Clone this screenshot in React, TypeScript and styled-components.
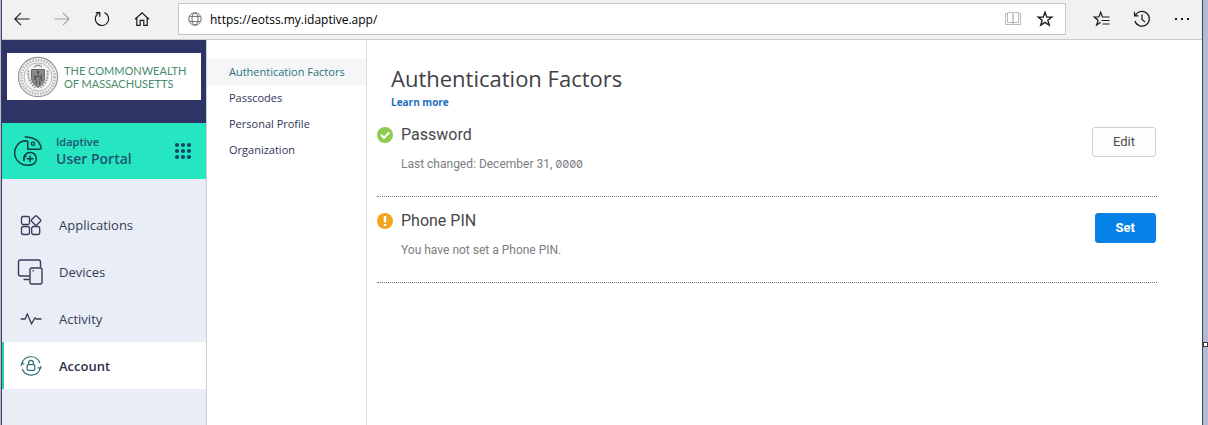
import React from "react";
import styled, { createGlobalStyle, css } from "styled-components";

const GlobalStyle = createGlobalStyle`
  *, *::before, *::after { box-sizing: border-box; }
  body { margin: 0; background: #b5bad6; font-family: "Open Sans", "Noto Sans", sans-serif; }
  button, input { font: inherit; }
  a { text-decoration: none; }
  ul { list-style: none; margin: 0; padding: 0; }
`;

const Desktop = styled.div`
  position: relative;
  min-height: 100vh;
  padding: 0 5px 0 1px;
  display: flex;
`;

const ResizeHandle = styled.span`
  position: absolute;
  right: 0;
  top: 342px;
  width: 5px;
  height: 5px;
  border: 1px solid #3a3a44;
  background: #fff;
`;

const BrowserWindow = styled.div`
  flex: 1;
  min-width: 0;
  display: flex;
  flex-direction: column;
  background: #fff;
  border: solid #3b4255;
  border-width: 0 1px;
`;

const Toolbar = styled.header`
  display: flex;
  align-items: center;
  height: 40px;
  padding: 0 8px 1px;
  background: #f1f1f1;
  border-bottom: 1px solid #c9c9c9;
`;

const ToolButton = styled.button<{ $faded?: boolean }>`
  display: grid;
  place-items: center;
  width: 24px;
  height: 24px;
  padding: 0;
  border: 0;
  background: none;
  color: ${(p) => (p.$faded ? "#a2a2a2" : "#1a1a1a")};
`;

const NavTools = styled.div`
  display: flex;
  gap: 16px;
  margin-right: 24px;
`;

const SideTools = styled.div`
  display: flex;
  gap: 16px;
  margin-left: 24px;
`;

const AddressBar = styled.div`
  flex: 1;
  display: flex;
  align-items: center;
  height: 32px;
  padding: 0 8px;
  background: #fff;
  border: 1px solid #c6c6c6;
`;

const AddressInput = styled.input`
  flex: 1;
  min-width: 0;
  margin: 0 8px 0 7px;
  padding: 0;
  border: 0;
  outline: 0;
  background: none;
  color: #000;
  font-family: "Open Sans", sans-serif;
  font-size: 12px;
`;

const AddressTools = styled.div`
  display: flex;
  gap: 8px;
`;

const Page = styled.div`
  flex: 1;
  display: flex;
`;

const Sidebar = styled.aside`
  flex: 0 0 205px;
  min-width: 0;
  background: #e9edf6;
  border-right: 1px solid #ccd0d9;
`;

const Brand = styled.div`
  height: 83px;
  padding: 13px 5px;
  background: #2f3466;
`;

const BrandCard = styled.div`
  display: flex;
  align-items: center;
  gap: 5px;
  height: 47px;
  padding-left: 10px;
  background: #fff;
  color: #468c6a;
  font-family: Lato, sans-serif;
  font-size: 11px;
  line-height: 13px;
  white-space: nowrap;
`;

const Portal = styled.div`
  display: flex;
  align-items: center;
  height: 56px;
  padding: 0 14px 0 12px;
  background: #26e5c1;
  color: #1d5570;
`;

const PortalName = styled.div`
  flex: 1;
  margin-left: 12px;
  font-size: 14px;
  line-height: 18px;
  font-weight: 600;
`;

const PortalVendor = styled.span`
  display: block;
  font-size: 11px;
  line-height: 16px;
`;

const LauncherButton = styled.button`
  display: grid;
  place-items: center;
  padding: 0;
  border: 0;
  background: none;
  color: #174866;
`;

const SideList = styled.ul`
  padding-top: 22px;
`;

const SideLink = styled.a<{ $active?: boolean }>`
  display: flex;
  align-items: center;
  gap: 13px;
  height: 47px;
  padding-left: 12px;
  border-left: 2px solid transparent;
  color: #363c58;
  font-size: 13px;
  ${(p) =>
    p.$active &&
    css`
      border-left-color: #2fcfa8;
      background: #fff;
      color: #2c3149;
      font-weight: 600;
    `}
`;

const SubNav = styled.nav`
  flex: 0 0 160px;
  padding-top: 19px;
  border-right: 1px solid #dadce1;
`;

const SubLink = styled.a<{ $active?: boolean }>`
  display: block;
  height: 26px;
  padding-left: 22px;
  font-size: 11px;
  line-height: 26px;
  white-space: nowrap;
  color: ${(p) => (p.$active ? "#2c7378" : "#2f3459")};
  background: ${(p) => (p.$active ? "#f5f6f8" : "transparent")};
`;

const Main = styled.main`
  flex: 1;
  min-width: 0;
  padding: 24px 45px 0 10px;
`;

const Heading = styled.div`
  height: 47px;
  padding-left: 14px;
`;

const Title = styled.h1`
  margin: 0;
  color: #3f4145;
  font-size: 22px;
  line-height: 28px;
  font-weight: 400;
`;

const LearnMore = styled.a`
  display: block;
  color: #1b6fc0;
  font-size: 10px;
  line-height: 20px;
  font-weight: 700;
`;

const Factor = styled.section`
  display: flex;
  align-items: flex-start;
  height: 86px;
  padding: 14px 1px 0 0;
  border-bottom: 1px dotted #777;
  font-family: Roboto, sans-serif;

  > svg {
    margin-top: 2px;
  }
`;

const FactorText = styled.div`
  flex: 1;
  margin-left: 8px;
`;

const FactorName = styled.h2`
  margin: 0;
  color: #46484c;
  font-size: 16px;
  line-height: 20px;
  font-weight: 400;
`;

const FactorNote = styled.p`
  margin: 10px 0 0;
  color: #7c7e81;
  font-size: 12px;
  line-height: 18px;
`;

const Year = styled.span`
  font-family: Inter, sans-serif;
  font-size: 11px;
  font-feature-settings: "zero";
`;

const ActionButton = styled.button<{ $primary?: boolean }>`
  height: 30px;
  margin-top: 2px;
  padding: 0 20px 2px;
  border: 1px solid #cfd0d2;
  border-radius: 3px;
  background: #fdfdfd;
  color: #4b4e52;
  font-size: 13px;
  ${(p) =>
    p.$primary &&
    css`
      border-color: #0a7fe0;
      background: #0581e8;
      color: #fff;
      font-weight: 700;
    `}
`;

type IconProps = { size?: number; view?: string; width?: number; children: React.ReactNode };

const Icon = ({ size = 20, view = "0 0 20 20", width = 1.1, children }: IconProps) => (
  <svg
    width={size}
    height={size}
    viewBox={view}
    fill="none"
    stroke="currentColor"
    strokeWidth={width}
    aria-hidden="true"
  >
    {children}
  </svg>
);

const StarOutline = () => (
  <Icon width={1.3}>
    <path d="M10 3.2l1.8 4.9h5.1l-4.1 3.2 1.5 5L10 13.4l-4.3 2.9 1.5-5-4.1-3.2h5.1z" />
  </Icon>
);

const Seal = () => (
  <svg width="42" height="42" viewBox="0 0 42 42" fill="none" aria-hidden="true">
    <circle cx="21" cy="21" r="19.6" fill="#f6f6f6" stroke="#969696" strokeWidth="1.2" />
    <circle cx="21" cy="21" r="16.8" stroke="#bdbdbd" strokeWidth="3" strokeDasharray="1.6 1.2" />
    <circle cx="21" cy="21" r="14" fill="#f4f4f4" stroke="#a2a2a2" strokeWidth=".8" />
    <path d="M17 11q4-3 8 0M18.500 9.300h5" stroke="#8a8a8a" strokeWidth="1.2" />
    <path d="M11.500 14.500c-1 7 1.500 13 7 17M30.500 14.500c1 7-1.500 13-7 17" stroke="#989898" strokeWidth="1.800" strokeDasharray="2 1" />
    <path d="M14.500 13.500h13v8c0 4.500-2.800 7.500-6.500 10-3.700-2.500-6.500-5.500-6.500-10z" fill="#8c8c8c" stroke="#646464" />
    <path d="M21 16.500v4m-2.500 0h5l-.8 4v4.500m-3.400 0v-4.500l-.8-4m-1-1.500v5m7-6v7" stroke="#595959" strokeWidth="1.200" />
    <circle cx="21" cy="16" r="1.2" fill="#4c4c4c" />
  </svg>
);

const Chameleon = () => (
  <svg width="30" height="32" viewBox="0 0 30 32" fill="none" stroke="#0f3d40" strokeWidth="1.500" strokeLinecap="round" strokeLinejoin="round" aria-hidden="true">
    <path d="M16 30A12.300 12.300 0 1 1 10.300 5.700L13.700 6.300V14.300H25.500Q27.500 14.300 27 12.500C26 6 19.500 1.600 11.200 2" />
    <circle cx="19" cy="8.700" r="1.600" strokeWidth="1.300" />
    <path d="M10 25.500A6.300 6.300 0 1 1 16 30" />
    <path d="M10 25.500Q9.600 21.500 12.500 21" strokeWidth="1.200" />
    <path d="M13.300 23.700h5.600M16.100 20.900v5.600" />
  </svg>
);

const Apps = () => (
  <Icon size={30} view="0 0 30 30" width={1.3}>
    <rect x="5.500" y="6.500" width="8" height="8" rx="1.500" />
    <rect x="5.500" y="16.500" width="8" height="8" rx="2" />
    <rect x="15.700" y="16.500" width="8" height="8" rx="2" />
    <path d="M20.700 6l3.800 3.800a1 1 0 0 1 0 1.400L20.700 15a1 1 0 0 1-1.400 0l-3.800-3.800a1 1 0 0 1 0-1.400L19.300 6a1 1 0 0 1 1.400 0z" />
  </Icon>
);

const Devices = () => (
  <Icon size={30} view="0 0 30 30" width={1.4}>
    <path d="M13.500 19H4.500a2 2 0 0 1-2-2V5a2 2 0 0 1 2-2h18a2 2 0 0 1 2 2v5.500M7.500 22.500h6" />
    <rect x="14" y="11" width="12" height="16" rx="1.500" />
    <path d="M16.500 13.800h1.300" />
  </Icon>
);

const Activity = () => (
  <Icon size={30} view="0 0 30 30" width={1.3}>
    <path d="M4.700 15h4.300l2.300-5 4.200 9.800 3.500-5.800 1.500 1h5" />
  </Icon>
);

const Account = () => (
  <Icon size={30} view="0 0 30 30" width={1.2}>
    <g stroke="#2f6f70">
      <path d="M5.800 12.800A9.500 9.500 0 0 1 23.900 12M24.300 16.800A9.500 9.500 0 0 1 6.200 18" />
      <path d="M5 14.800L6 12.300l2.300.8M25.200 15l-.9 2.400-2.500-.8" />
      <rect x="11.200" y="13.700" width="7.600" height="5.600" rx="1" />
      <path d="M12.700 13.700v-2a2.300 2.300 0 0 1 4.600 0v2" />
    </g>
  </Icon>
);

const sideItems = [
  { label: "Applications", icon: <Apps /> },
  { label: "Devices", icon: <Devices /> },
  { label: "Activity", icon: <Activity /> },
  { label: "Account", icon: <Account />, active: true },
];

const subItems = ["Authentication Factors", "Passcodes", "Personal Profile", "Organization"];

export default function App() {
  return (
    <Desktop>
      <GlobalStyle />
      <BrowserWindow>
        <Toolbar>
          <NavTools>
            <ToolButton aria-label="Back">
              <Icon><path d="M17.500 10H3M9 3.800L2.800 10 9 16.200" /></Icon>
            </ToolButton>
            <ToolButton aria-label="Forward" $faded>
              <Icon><path d="M2.500 10H17M11 3.800l6.200 6.200-6.200 6.200" /></Icon>
            </ToolButton>
            <ToolButton aria-label="Refresh">
              <Icon width={1.2}><path d="M12.500 3.600A6.700 6.700 0 1 1 6.300 4.200M3.800 3.700h4v4" /></Icon>
            </ToolButton>
            <ToolButton aria-label="Home">
              <Icon width={1.2}><path d="M3 10.200L10 3.700l7 6.500M4.800 9v7.400h3.400v-5h3.600v5h3.400V9" /></Icon>
            </ToolButton>
          </NavTools>
          <AddressBar>
            <Icon size={16} view="0 0 16 16" width={1}>
              <g stroke="#6a6a6a">
                <circle cx="8" cy="8" r="6.200" />
                <ellipse cx="8" cy="8" rx="3" ry="6.200" />
                <path d="M2.500 5.500h11M2.500 10.500h11" strokeWidth=".9" />
              </g>
            </Icon>
            <AddressInput aria-label="Address" defaultValue="https://eotss.my.idaptive.app/" />
            <AddressTools>
              <ToolButton aria-label="Reading view" $faded>
                <Icon width={1}>
                  <path d="M4.500 3.500H9q1 0 1 1v10q0-1-1-1H4.500zM15.500 3.500H11q-1 0-1 1v10q0-1 1-1h4.500zM4.500 4.500h-2v11h15v-11h-2" stroke="#b9b9b9" />
                </Icon>
              </ToolButton>
              <ToolButton aria-label="Add to favorites"><StarOutline /></ToolButton>
            </AddressTools>
          </AddressBar>
          <SideTools>
            <ToolButton aria-label="Favorites">
              <Icon width={1.2}>
                <path d="M11.500 8H10.500L8.700 3.300 6.900 8H2.300l3.800 3.200-1.500 4.900 4.100-2.800M10.500 8h7M9.500 11.500h8M10.500 15h7" />
              </Icon>
            </ToolButton>
            <ToolButton aria-label="History">
              <Icon width={1.2}><path d="M3.300 6.500a7.400 7.400 0 1 1-.4 5.500M2.500 2.800v4h4M10 5.500v5l3 2.500" /></Icon>
            </ToolButton>
            <ToolButton aria-label="More">
              <Icon>
                <g fill="currentColor" stroke="none">
                  <rect x="3" y="9" width="2" height="2" />
                  <rect x="9" y="9" width="2" height="2" />
                  <rect x="15" y="9" width="2" height="2" />
                </g>
              </Icon>
            </ToolButton>
          </SideTools>
        </Toolbar>
        <Page>
          <Sidebar>
            <Brand>
              <BrandCard>
                <Seal />
                <span>THE COMMONWEALTH<br />OF MASSACHUSETTS</span>
              </BrandCard>
            </Brand>
            <Portal>
              <Chameleon />
              <PortalName>
                <PortalVendor>Idaptive</PortalVendor>
                User Portal
              </PortalName>
              <LauncherButton aria-label="Open app launcher">
                <svg width="18" height="18" viewBox="0 0 18 18" fill="currentColor" aria-hidden="true">
                  {[3, 9, 15].map((y) => [3, 9, 15].map((x) => <circle key={`${x}-${y}`} cx={x} cy={y} r="2.100" />))}
                </svg>
              </LauncherButton>
            </Portal>
            <nav aria-label="Portal">
              <SideList>
                {sideItems.map((item) => (
                  <li key={item.label}>
                    <SideLink href="#" $active={item.active}>
                      {item.icon}
                      {item.label}
                    </SideLink>
                  </li>
                ))}
              </SideList>
            </nav>
          </Sidebar>
          <SubNav aria-label="Account">
            <ul>
              {subItems.map((label, i) => (
                <li key={label}>
                  <SubLink href="#" $active={i === 0}>{label}</SubLink>
                </li>
              ))}
            </ul>
          </SubNav>
          <Main>
            <Heading>
              <Title>Authentication Factors</Title>
              <LearnMore href="#">Learn more</LearnMore>
            </Heading>
            <Factor>
              <svg width="16" height="16" viewBox="0 0 16 16" fill="none" aria-hidden="true">
                <circle cx="8" cy="8" r="8" fill="#8fc950" />
                <path d="M4 7.800l3 3 5.200-5.300" stroke="#fff" strokeWidth="2" />
              </svg>
              <FactorText>
                <FactorName>Password</FactorName>
                <FactorNote>Last changed: December 31, <Year>0000</Year></FactorNote>
              </FactorText>
              <ActionButton>Edit</ActionButton>
            </Factor>
            <Factor>
              <svg width="16" height="16" viewBox="0 0 16 16" aria-hidden="true">
                <circle cx="8" cy="8" r="8" fill="#f2a620" />
                <path d="M6.800 3h2.400v6.500H6.800zM6.800 11h2.400v2H6.800z" fill="#fff" />
              </svg>
              <FactorText>
                <FactorName>Phone PIN</FactorName>
                <FactorNote>You have not set a Phone PIN.</FactorNote>
              </FactorText>
              <ActionButton $primary>Set</ActionButton>
            </Factor>
          </Main>
        </Page>
      </BrowserWindow>
      <ResizeHandle />
    </Desktop>
  );
}
